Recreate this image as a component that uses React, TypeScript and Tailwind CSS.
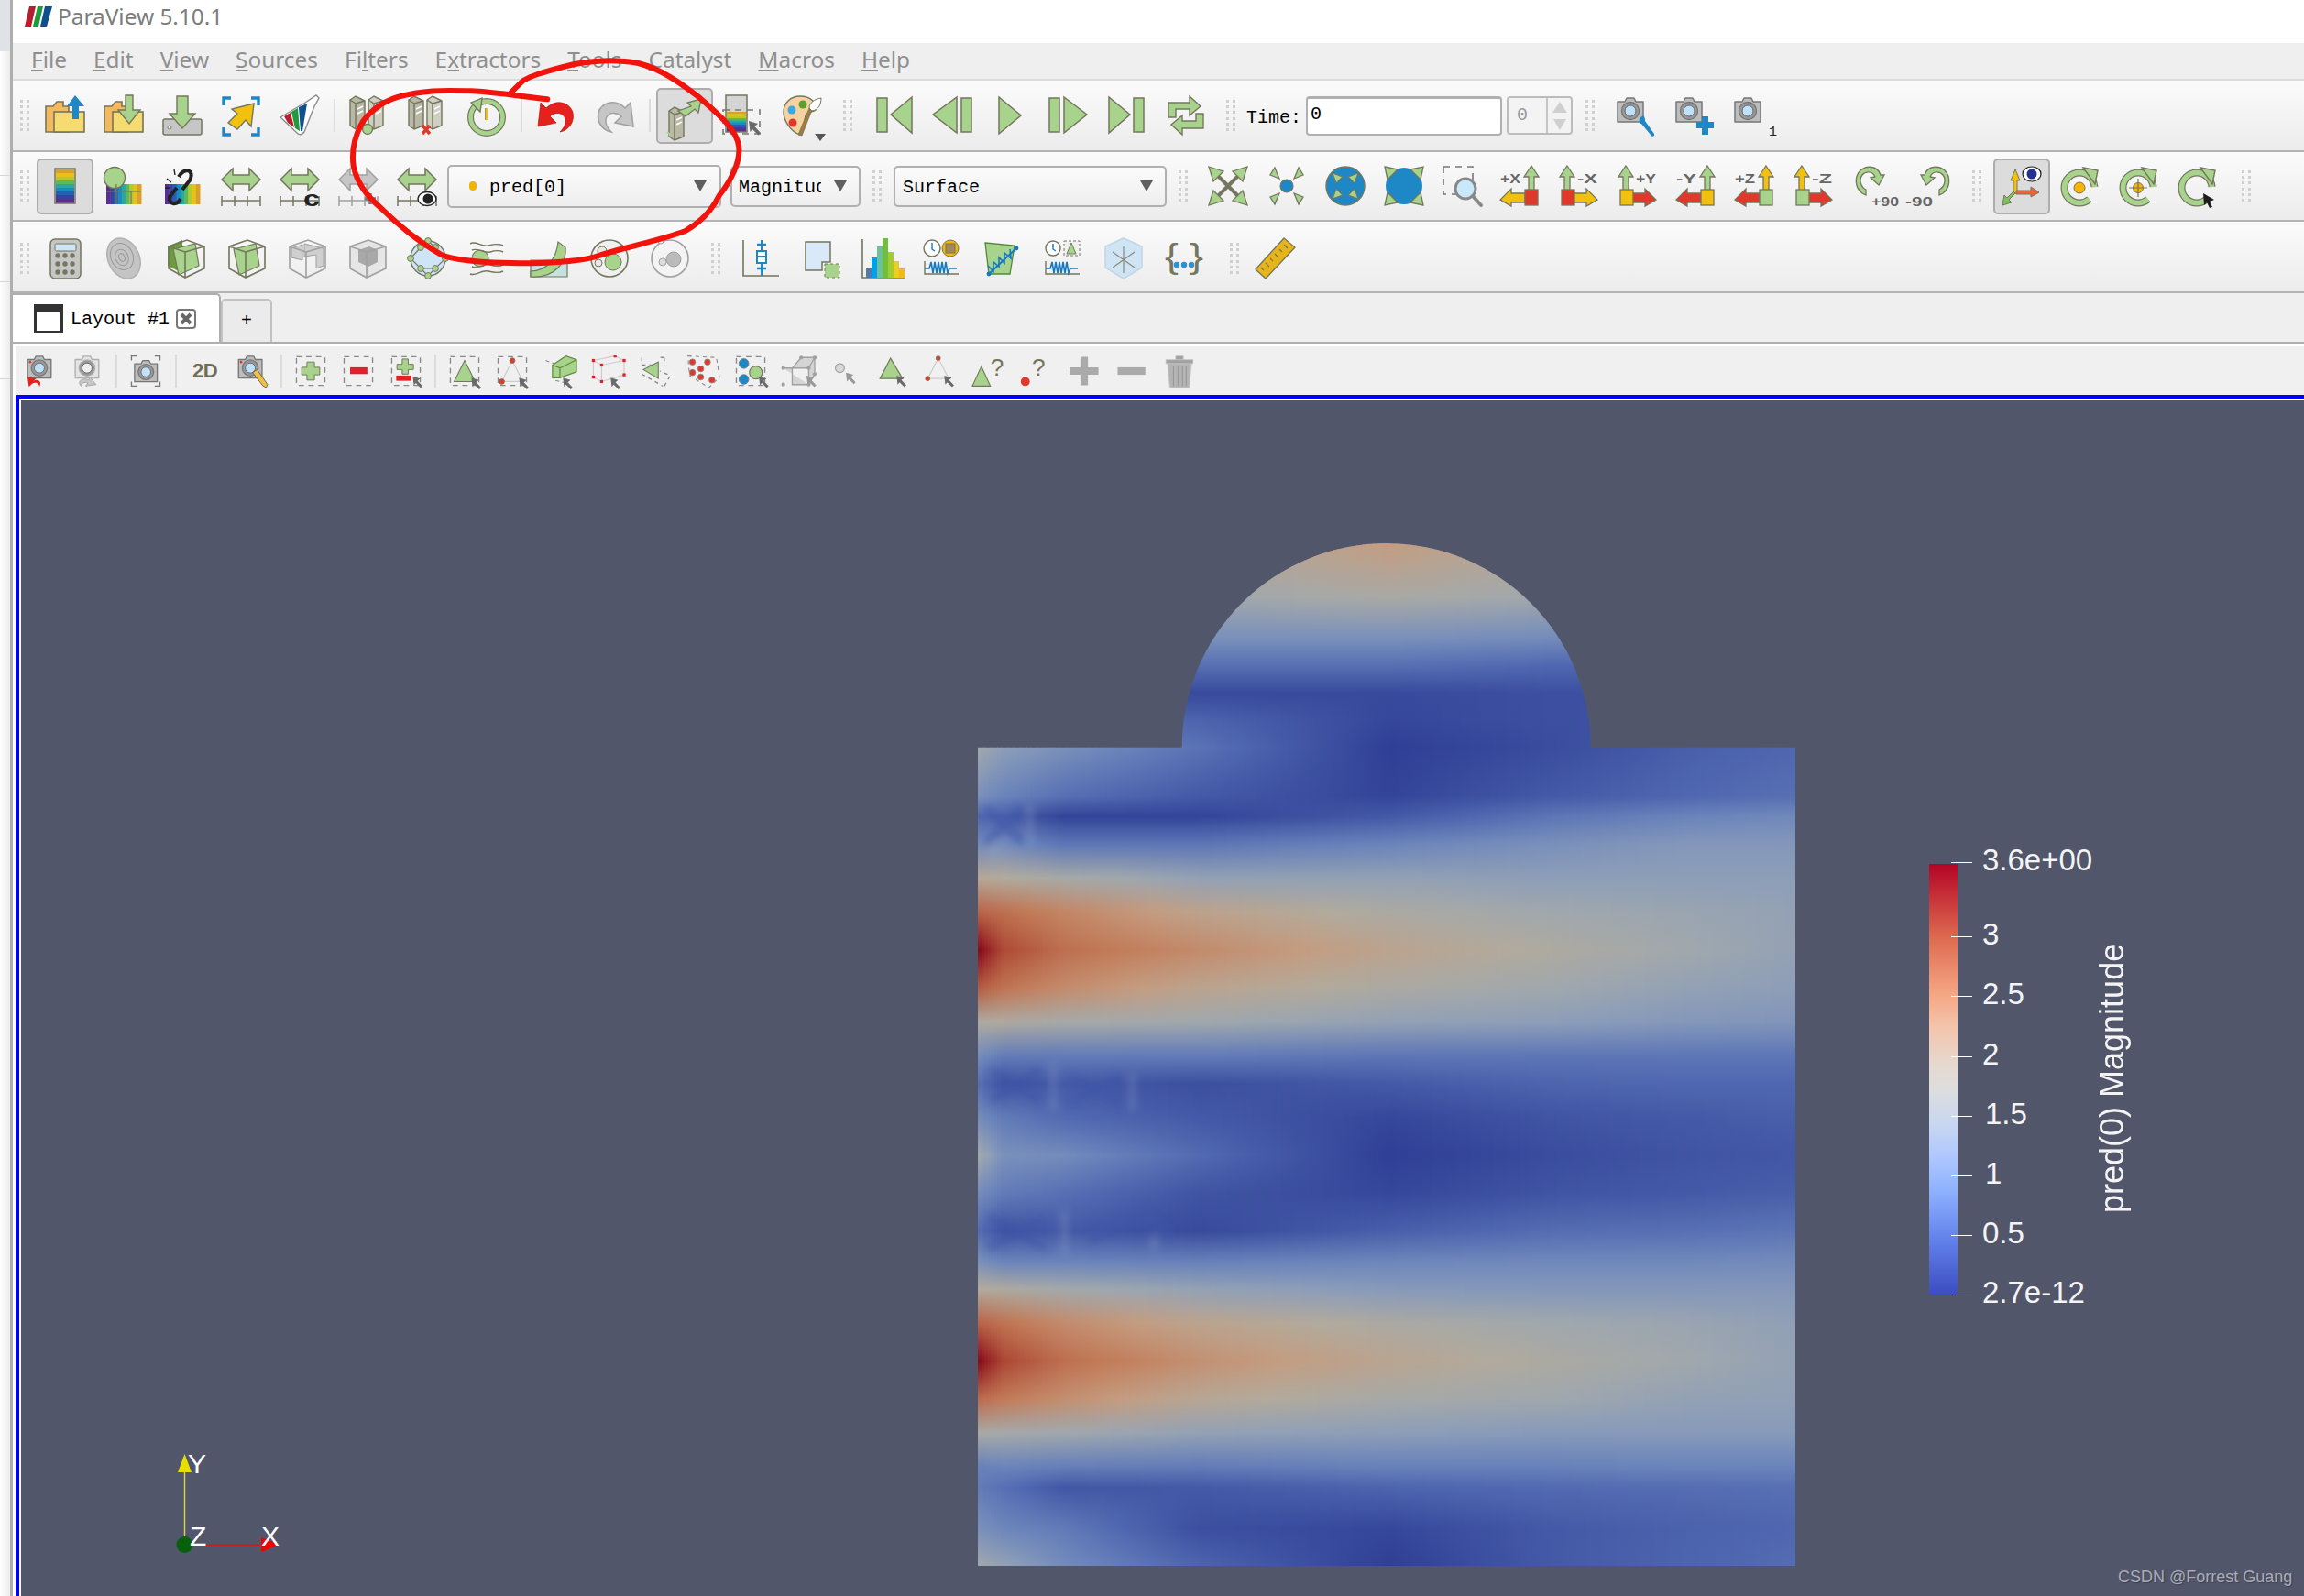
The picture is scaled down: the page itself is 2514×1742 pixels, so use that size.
import type { ReactNode } from "react";

const O = "#74765d";
const G = "#a8d38d";
const Y = "#f2c10f";
const R = "#e0392b";
const B = "#1e88c7";
const GY = "#c6c6c6";
const GO = "#a0a0a0";

const RAINBOW = ["#d9a02a", "#e8c21a", "#b5c92e", "#5cb85c", "#25a9a0", "#1e88c7", "#2460b0", "#3a3fa0", "#5a2d90"];

/* ---------- heat map data: scalar field sampled from the picture ---------- */
const COLS = [46, 90, 200, 450, 800, 1100, 1350, 1548];
const ROWS: [number, number[]][] = [
  [31, [0.5, 0.5, 0.5, 0.5, 0.6, 0.5, 0.5, 0.5]],
  [110, [0.42, 0.42, 0.42, 0.42, 0.46, 0.42, 0.42, 0.42]],
  [170, [0.3, 0.3, 0.3, 0.3, 0.3, 0.28, 0.28, 0.28]],
  [210, [0.18, 0.18, 0.18, 0.18, 0.18, 0.15, 0.15, 0.15]],
  [250, [0.04, 0.04, 0.04, 0.04, 0.04, 0.06, 0.06, 0.06]],
  [290, [0.14, 0.14, 0.14, 0.14, 0.03, 0.06, 0.08, 0.08]],
  [329, [0.42, 0.36, 0.3, 0.19, 0, 0.05, 0.12, 0.15]],
  [400, [0.3, 0.25, 0.18, 0.1, 0.02, 0.1, 0.15, 0.18]],
  [430, [0.15, 0.12, 0.02, 0.02, 0.1, 0.2, 0.25, 0.27]],
  [470, [0.28, 0.28, 0.2, 0.2, 0.25, 0.3, 0.33, 0.33]],
  [520, [0.52, 0.5, 0.45, 0.38, 0.38, 0.36, 0.36, 0.36]],
  [570, [0.78, 0.75, 0.68, 0.56, 0.47, 0.42, 0.4, 0.38]],
  [625, [1, 0.85, 0.75, 0.66, 0.55, 0.48, 0.42, 0.38]],
  [680, [0.8, 0.74, 0.66, 0.55, 0.47, 0.42, 0.38, 0.36]],
  [730, [0.48, 0.48, 0.45, 0.42, 0.38, 0.36, 0.33, 0.32]],
  [780, [0.28, 0.22, 0.22, 0.22, 0.2, 0.2, 0.2, 0.2]],
  [820, [0.17, 0.07, 0.1, 0.06, 0.1, 0.14, 0.15, 0.15]],
  [870, [0.28, 0.22, 0.16, 0.1, 0.03, 0.08, 0.1, 0.12]],
  [925, [0.42, 0.3, 0.28, 0.16, 0, 0.05, 0.08, 0.09]],
  [980, [0.28, 0.22, 0.18, 0.08, 0.03, 0.08, 0.1, 0.12]],
  [1035, [0.16, 0.07, 0.1, 0.04, 0.12, 0.17, 0.18, 0.2]],
  [1080, [0.3, 0.25, 0.25, 0.24, 0.26, 0.27, 0.27, 0.28]],
  [1120, [0.5, 0.48, 0.43, 0.38, 0.34, 0.33, 0.33, 0.33]],
  [1170, [0.78, 0.74, 0.66, 0.55, 0.47, 0.42, 0.4, 0.37]],
  [1225, [1, 0.86, 0.75, 0.64, 0.54, 0.47, 0.42, 0.38]],
  [1280, [0.76, 0.72, 0.65, 0.53, 0.45, 0.42, 0.38, 0.37]],
  [1330, [0.46, 0.44, 0.42, 0.38, 0.36, 0.34, 0.34, 0.34]],
  [1380, [0.24, 0.25, 0.23, 0.22, 0.24, 0.24, 0.25, 0.25]],
  [1410, [0.22, 0.18, 0.09, 0.1, 0.14, 0.16, 0.17, 0.18]],
  [1470, [0.3, 0.26, 0.22, 0.06, 0.03, 0.1, 0.13, 0.15]],
  [1524, [0.42, 0.38, 0.28, 0.14, 0, 0.1, 0.14, 0.17]],
];
const CMAP: [number, number[]][] = [
  [0, [47, 63, 149]],
  [0.15, [79, 103, 176]],
  [0.25, [106, 132, 187]],
  [0.35, [138, 156, 186]],
  [0.42, [160, 168, 173]],
  [0.5, [178, 170, 156]],
  [0.6, [196, 156, 128]],
  [0.72, [194, 122, 87]],
  [0.85, [174, 74, 54]],
  [1, [138, 12, 28]],
];
function colorAt(v: number) {
  let i = 0;
  while (i < CMAP.length - 2 && v > CMAP[i + 1][0]) i++;
  const [a, ca] = CMAP[i];
  const [b, cb] = CMAP[i + 1];
  const t = Math.min(1, Math.max(0, (v - a) / (b - a)));
  const c = ca.map((n, k) => Math.round(n + (cb[k] - n) * t));
  return `rgb(${c[0]},${c[1]},${c[2]})`;
}
function valueAt(x: number, vals: number[]) {
  let i = 0;
  while (i < COLS.length - 2 && x > COLS[i + 1]) i++;
  const t = (x - COLS[i]) / (COLS[i + 1] - COLS[i]);
  return vals[i] + (vals[i + 1] - vals[i]) * t;
}
const STRIPS = Array.from({ length: 251 }, (_, i) => 46 + i * 6);

function HeatMap() {
  const shape = "M46 329H421A375.5 298 0 0 1 1172 329H1548V1524H46Z";
  return (
    <svg width={892} height={1116} viewBox="46 31 1502 1493" preserveAspectRatio="none" className="absolute left-[1044px] top-[156px]">
      <defs>
        <clipPath id="mesh">
          <path d={shape} />
        </clipPath>
        <filter id="soft" x="-20%" y="-20%" width="140%" height="140%">
          <feGaussianBlur stdDeviation="7 6" />
        </filter>
        {STRIPS.map((x) => (
          <linearGradient key={x} id={`s${x}`} gradientUnits="userSpaceOnUse" x1="0" y1="31" x2="0" y2="1524">
            {ROWS.map(([y, vals]) => (
              <stop key={y} offset={(y - 31) / 1493} stopColor={colorAt(valueAt(x, vals))} />
            ))}
          </linearGradient>
        ))}
      </defs>
      <g clipPath="url(#mesh)">
        {STRIPS.map((x) => (
          <rect key={x} x={x} y={31} width={7} height={1493} fill={`url(#s${x})`} shapeRendering="crispEdges" />
        ))}
        <g filter="url(#soft)" fill="none" strokeWidth="12">
          <g stroke="#3f57a8" opacity="0.6">
            <path d="M60 418L130 468M60 468L130 418" />
            <path d="M70 800L160 845M70 845L160 800M215 810L310 850M215 850L310 810" />
            <path d="M65 1015L170 1060M65 1060L170 1015M250 1050L350 1010L400 1040" />
          </g>
          <g stroke="#93a6c8" opacity="0.35" strokeWidth="10">
            <path d="M142 412V470M76 470V495M185 790V860M330 805V860M205 1005V1070M370 1040V1065" />
          </g>
        </g>
      </g>
    </svg>
  );
}

/* ---------- small svg helpers ---------- */
function Ico({ children, s = 44 }: { children: ReactNode; s?: number }) {
  return (
    <svg width={s} height={s} viewBox="0 0 44 44" className="block overflow-visible">
      {children}
    </svg>
  );
}
function Cur({ x, y, c = "#6a6a6a" }: { x: number; y: number; c?: string }) {
  return <path d="M0 0L10 3L6.5 6L13 13L10.5 15.5L4 9L1.5 12Z" fill={c} transform={`translate(${x} ${y})`} />;
}
function Dash({ x = 3, y = 3, w = 38, h = 38, c = "#777" }: { x?: number; y?: number; w?: number; h?: number; c?: string }) {
  return <rect x={x} y={y} width={w} height={h} fill="none" stroke={c} strokeWidth="1.6" strokeDasharray="7 6" />;
}
function Bars({ x, y, w, h, vertical = true }: { x: number; y: number; w: number; h: number; vertical?: boolean }) {
  return (
    <g>
      {RAINBOW.map((c, i) =>
        vertical ? (
          <rect key={i} x={x} y={y + (i * h) / 9} width={w} height={h / 9 + 0.5} fill={c} />
        ) : (
          <rect key={i} x={x + (i * w) / 9} y={y} width={w / 9 + 0.5} height={h} fill={[...RAINBOW].reverse()[i]} />
        ),
      )}
    </g>
  );
}
function Server({ x, y, c = "#b9b8a6", s = O }: { x: number; y: number; c?: string; s?: string }) {
  return (
    <g transform={`translate(${x} ${y})`} stroke={s} strokeWidth="1.4">
      <path d="M0 4L6 0L16 5V32L6 36L0 32Z" fill={c} />
      <path d="M6 8L16 5M6 8V36M6 8L0 4" fill="none" />
      <path d="M8 14L14 11M8 19L14 16" stroke="#fff" />
    </g>
  );
}
function Folder({ back = "#f4b95e", front = "#f6dc70" }: { back?: string; front?: string }) {
  return (
    <g stroke={O} strokeWidth="1.6">
      <path d="M1 40V12H9L13 7H20V12H26V40Z" fill={back} />
      <rect x="10" y="18" width="33" height="22" fill={front} />
    </g>
  );
}
function Camera({ x = 0, y = 0, s = 1, c = "#bdbdbd", line = "#777", lens = "#bfe2fa", dot = false }: { x?: number; y?: number; s?: number; c?: string; line?: string; lens?: string; dot?: boolean }) {
  return (
    <g transform={`translate(${x} ${y}) scale(${s})`}>
      <path d="M2 6H10L12 2H20L22 6H30V28H2Z" fill={c} stroke={line} strokeWidth="1.5" strokeLinejoin="round" />
      <circle cx="16" cy="16" r="9.5" fill="#999" stroke={line} strokeWidth="1.4" />
      <circle cx="16" cy="16" r="6" fill={lens} stroke="#666" />
      {dot && <circle cx="5" cy="9" r="1.5" fill="#e0392b" />}
    </g>
  );
}
function RulerArrow({ c = G, line = O }: { c?: string; line?: string }) {
  return (
    <g stroke={line} strokeWidth="1.5">
      <path d="M1 15L13 3V10H31V3L43 15L31 27V20H13V27Z" fill={c} />
      <path d="M1 33V44M1 38H43M15 33V44M29 33V44M43 33V44" fill="none" />
    </g>
  );
}
function UpArrow({ x, c }: { x: number; c: string }) {
  return <path d={`M${x} 0L${x + 8} 12H${x + 3}V30H${x - 3}V12H${x - 8}Z`} fill={c} stroke={O} strokeWidth="1.3" />;
}
function SideArrow({ x, dir, c }: { x: number; dir: 1 | -1; c: string }) {
  const t = x + dir * 27;
  return <path d={`M${x} 30H${x + dir * 15}V25L${t} 37L${x + dir * 15} 44V40H${x}Z`} fill={c} stroke={O} strokeWidth="1.3" />;
}
function Axis({ label, up, box, side, flip }: { label: string; up: string; box: string; side: string; flip: boolean }) {
  const sx = flip ? 30 : 2;
  return (
    <Ico>
      <g transform={flip ? "translate(-4 0)" : undefined}>
        <UpArrow x={flip ? 37 : 8} c={up} />
        <SideArrow x={flip ? 30 : 14} dir={flip ? -1 : 1} c={side} />
        <rect x={sx} y={26} width="14" height="17" fill={box} stroke={O} strokeWidth="1.3" />
        <text x={flip ? 14 : 30} y="19" textAnchor="middle" fontFamily="Liberation Sans" fontWeight="700" fontSize="15" fill="#666" textLength="22" lengthAdjust="spacingAndGlyphs">
          {label}
        </text>
      </g>
    </Ico>
  );
}
function Rotate({ label, flip }: { label: string; flip: boolean }) {
  return (
    <Ico>
      <g transform={flip ? "translate(44 0) scale(-1 1)" : undefined}>
        <path d="M10 30C2 24 1 12 8 5C15 -1 27 0 30 10L34 10L28 21L19 13L24 12C21 5 13 6 10 10C6 15 8 23 14 26L14 32Z" fill={G} stroke={O} strokeWidth="1.3" />
      </g>
      <text x={flip ? 8 : 35} y="44" textAnchor="middle" fontFamily="Liberation Sans" fontWeight="700" fontSize="15" fill="#666" textLength="30" lengthAdjust="spacingAndGlyphs">
        {label}
      </text>
    </Ico>
  );
}
function RingArrow({ children }: { children?: ReactNode }) {
  return (
    <Ico>
      <circle cx="21" cy="24" r="16.5" fill="none" stroke={O} strokeWidth="8" strokeDasharray="88 16" strokeDashoffset="-14" />
      <circle cx="21" cy="24" r="16.5" fill="none" stroke={G} strokeWidth="5.6" strokeDasharray="88 16" strokeDashoffset="-14" />
      <path d="M25 2L41 5L38 20Z" fill={G} stroke={O} strokeWidth="1.4" />
      {children}
    </Ico>
  );
}
function CubeFrame({ line = O }: { line?: string }) {
  return <path d="M3 9L23 2L42 9V33L21 43L3 33ZM3 9L21 15V43M21 15L42 9" fill="none" stroke={line} strokeWidth="1.6" />;
}
function Trace({ y = 32 }: { y?: number }) {
  return (
    <g>
      <path d={`M3 ${y - 8}V${y + 6}H40`} fill="none" stroke={O} strokeWidth="1.4" />
      <path d={`M3 ${y}H8L10 ${y - 7}L12 ${y + 5}L14 ${y - 7}L16 ${y + 5}L18 ${y - 7}L20 ${y + 5}L22 ${y - 7}L24 ${y + 5}L26 ${y - 7}L28 ${y + 5}L30 ${y}H38`} fill="none" stroke="#1578c2" strokeWidth="1.6" />
    </g>
  );
}
function Clock({ x, y, r = 8 }: { x: number; y: number; r?: number }) {
  return (
    <g>
      <circle cx={x} cy={y} r={r} fill="#fff" stroke={O} strokeWidth="1.4" />
      <path d={`M${x} ${y - r + 3}V${y + 1}L${x + 3} ${y + 3}`} fill="none" stroke="#1578c2" strokeWidth="1.4" />
    </g>
  );
}

/* ---------- bar pieces ---------- */
function Btn({ children, w = "w-[64px]" }: { children: ReactNode; w?: string }) {
  return <div className={`${w} h-full shrink-0 flex items-center justify-center`}>{children}</div>;
}
function Checked({ children }: { children: ReactNode }) {
  return (
    <div className="w-[64px] h-full shrink-0 flex items-center justify-center">
      <div className="w-[62px] h-[61px] bg-[#dcdcdc] border-2 border-[#adadad] rounded-[5px] flex items-center justify-center">{children}</div>
    </div>
  );
}
function Grip({ w = "w-[25px]" }: { w?: string }) {
  return (
    <div className={`${w} shrink-0 flex justify-center`}>
      <div className="grid grid-cols-2 gap-x-[4px] gap-y-[3.4px]">
        {Array.from({ length: 12 }, (_, i) => (
          <span key={i} className="w-[3px] h-[3px] bg-[#d0d0d0]" />
        ))}
      </div>
    </div>
  );
}
function Sep({ w = "w-[12px]" }: { w?: string }) {
  return (
    <div className={`${w} shrink-0 flex justify-center`}>
      <span className="w-[2px] h-[36px] bg-[#dcdcdc]" />
    </div>
  );
}
function Caret({ c = "#5f5f5f" }: { c?: string }) {
  return <span className="w-0 h-0 border-x-[7px] border-x-transparent border-t-[12px]" style={{ borderTopColor: c }} />;
}
function ToolRow({ children, h }: { children: ReactNode; h: string }) {
  return <div className={`${h} flex items-center bg-linear-to-b from-[#fbfbfb] to-[#ececec] border-b-[2px] border-[#b4b4b4]`}>{children}</div>;
}

const TICKS: [number, string, number][] = [
  [505, "3.6e+00", 2163],
  [586, "3", 2163],
  [651, "2.5", 2163],
  [717, "2", 2163],
  [782, "1.5", 2166],
  [847, "1", 2166],
  [912, "0.5", 2163],
  [977, "2.7e-12", 2163],
];

const mono = "font-['Liberation_Mono',monospace]";

export default function App() {
  return (
    <div className="relative w-[2514px] h-[1742px] overflow-hidden flex bg-white font-['Noto_Sans',sans-serif]">
      {/* strip of the window behind */}
      <div className="w-[11px] shrink-0 flex flex-col bg-linear-to-r from-[#ffffff] to-[#ececec]">
        <div className="h-[56px] bg-[#dfe3e7]" />
        <div className="h-[136px] border-b border-[#d6d6d6]" />
        <div className="h-[116px] border-b border-[#d6d6d6]" />
        <div className="h-[106px] border-b border-[#d6d6d6]" />
      </div>
      <div className="w-[3px] shrink-0 bg-[#aeaeae]" />

      <div className="flex-1 min-w-0 flex flex-col">
        {/* title bar */}
        <div className="h-[47px] bg-white flex items-center pl-[12px] pb-[11px] shrink-0">
          <svg width="32" height="24" viewBox="0 0 32 24" className="block">
            <path d="M6 1H13L8 23H1Z" fill="#b3202c" />
            <path d="M15 1H21L16 23H10Z" fill="#1f9a3c" />
            <path d="M23 1H31L25 23H18Z" fill="#0f4f8f" />
          </svg>
          <span className="ml-[5px] text-[24.4px] text-[#7c7c7c] leading-none">ParaView 5.10.1</span>
        </div>
        {/* menu */}
        <div className="h-[41px] bg-[#efefef] shrink-0 flex items-center pl-[20px] pb-[2px] gap-x-[29px] border-b-[2px] border-[#dadada] text-[24.4px] text-[#8f8f8f] leading-none">
          <span><u>F</u>ile</span>
          <span><u>E</u>dit</span>
          <span><u>V</u>iew</span>
          <span><u>S</u>ources</span>
          <span>Fi<u>l</u>ters</span>
          <span>E<u>x</u>tractors</span>
          <span><u>T</u>ools</span>
          <span><u>C</u>atalyst</span>
          <span><u>M</u>acros</span>
          <span><u>H</u>elp</span>
        </div>

        {/* toolbar 1 */}
        <ToolRow h="h-[78px] shrink-0">
          <Grip />
          <Btn>
            <Ico>
              <Folder />
              <path d="M33 0L43 12H37V26H30V12H24Z" fill={B} />
            </Ico>
          </Btn>
          <Btn>
            <Ico>
              <Folder />
              <path d="M24 0H32V16H40L28 31L16 16H24Z" fill={G} stroke={O} strokeWidth="1.4" />
            </Ico>
          </Btn>
          <Btn>
            <Ico>
              <rect x="1" y="26" width="42" height="17" rx="2" fill={GY} stroke={O} strokeWidth="1.5" />
              <circle cx="8" cy="35" r="2" fill="#fff" stroke={O} />
              <path d="M16 1H28V20H36L22 36L8 20H16Z" fill={G} stroke={O} strokeWidth="1.4" />
            </Ico>
          </Btn>
          <Btn>
            <Ico>
              <path d="M3 11V3H11M33 3H41V11M3 35V43H11M41 35V43H33" fill="none" stroke={B} strokeWidth="3.4" />
              <path d="M36 9L33 34L27 27L18 37L8 30L18 20L12 15Z" fill={Y} stroke={O} strokeWidth="1.4" />
            </Ico>
          </Btn>
          <Btn>
            <Ico>
              <path d="M1 24L28 8L40 0L43 3L38 12L27 40Q23 45 19 41Z" fill="#fff" stroke="#8a8a8a" strokeWidth="1.4" />
              <path d="M5 23L12 19L16 35L9 30Z" fill="#b3202c" />
              <path d="M13 18L20 14L22 39L17 36Z" fill="#1f9a3c" />
              <path d="M21 13L30 9L25 39L23 39Z" fill="#0f4f8f" />
            </Ico>
          </Btn>
          <Sep />
          <Btn>
            <Ico>
              <Server x={1} y={1} />
              <Server x={21} y={1} c="#d0d0c2" />
              <circle cx="20" cy="37" r="5.5" fill={G} stroke={O} strokeWidth="1.3" />
            </Ico>
          </Btn>
          <Btn>
            <Ico>
              <Server x={1} y={1} />
              <Server x={21} y={1} c="#d0d0c2" />
              <path d="M16 33L24 42M24 33L16 42" stroke={R} strokeWidth="3.4" />
            </Ico>
          </Btn>
          <Btn>
            <Ico>
              <circle cx="22" cy="24" r="17.5" fill="none" stroke={O} strokeWidth="7" />
              <circle cx="22" cy="24" r="17.5" fill="none" stroke={G} strokeWidth="4.6" />
              <path d="M5 8L17 3L15 18Z" fill={G} stroke={O} strokeWidth="1.3" />
              <path d="M22 14V27" stroke={Y} strokeWidth="3" />
              <path d="M20.5 14V27M23.5 14V27" stroke={O} strokeWidth="0.7" />
            </Ico>
          </Btn>
          <Sep />
          <Btn>
            <Ico>
              <path d="M5 8L2 34L22 30L15 23C22 17 30 19 32 26C33 31 30 36 26 40C36 38 42 29 40 19C37 8 22 3 11 14Z" fill="#e6201c" stroke="#b51a16" strokeWidth="0.8" />
            </Ico>
          </Btn>
          <Btn>
            <Ico>
              <path d="M39 8L42 34L22 30L29 23C22 17 14 19 12 26C11 31 14 36 18 40C8 38 2 29 4 19C7 8 22 3 33 14Z" fill={GY} stroke={GO} strokeWidth="1.5" />
            </Ico>
          </Btn>
          <Sep />
          <Checked>
            <Ico>
              <Server x={5} y={13} c="#b9b8a6" />
              <path d="M15 17L29 12L25 8L40 4L37 19L33 15L23 23Z" fill={G} stroke={O} strokeWidth="1.3" />
              <path d="M7 44L3 40" stroke={G} strokeWidth="2" />
            </Ico>
          </Checked>
          <Btn>
            <Ico>
              <rect x="3" y="0" width="23" height="40" fill="#d4d4d4" stroke={O} strokeWidth="1.5" />
              <Bars x={4} y={18} w={21} h={21} />
              <Dash x={0} y={16} w={40} h={26} c="#777" />
              <Cur x={28} y={28} />
            </Ico>
          </Btn>
          <Btn>
            <Ico>
              <path d="M20 1C32 1 38 8 37 16C35 18 28 18 26 22C24 32 24 43 20 43C10 40 2 28 2 18C2 8 10 1 20 1Z" fill="#f5d2a2" stroke={O} strokeWidth="1.4" />
              <circle cx="11" cy="16" r="4.5" fill="#39a9e0" />
              <circle cx="23" cy="10" r="4.5" fill="#5aa02c" />
              <circle cx="12" cy="30" r="4.5" fill="#e0392b" />
              <path d="M18 43L30 14L33 16L22 44Z" fill="#a07c3c" stroke={O} strokeWidth="0.8" />
              <path d="M30 14C30 8 36 4 43 3C43 10 40 16 33 17Z" fill="#fff" stroke={O} strokeWidth="1" />
              <path d="M36 42H48L42 50Z" fill="#555" />
            </Ico>
          </Btn>
          <Grip w="w-[35px]" />
          <Btn>
            <Ico>
              <rect x="5" y="3" width="11" height="37" fill={G} stroke={O} strokeWidth="1.5" />
              <path d="M43 2V41L20 21Z" fill={G} stroke={O} strokeWidth="1.5" />
            </Ico>
          </Btn>
          <Btn>
            <Ico>
              <rect x="33" y="3" width="11" height="37" fill={G} stroke={O} strokeWidth="1.5" />
              <path d="M28 2V41L2 21Z" fill={G} stroke={O} strokeWidth="1.5" />
            </Ico>
          </Btn>
          <Btn>
            <Ico>
              <path d="M10 2L34 22L10 42Z" fill={G} stroke={O} strokeWidth="1.5" />
            </Ico>
          </Btn>
          <Btn>
            <Ico>
              <rect x="1" y="3" width="11" height="37" fill={G} stroke={O} strokeWidth="1.5" />
              <path d="M17 2L42 21L17 41Z" fill={G} stroke={O} strokeWidth="1.5" />
            </Ico>
          </Btn>
          <Btn>
            <Ico>
              <path d="M2 2L25 21L2 41Z" fill={G} stroke={O} strokeWidth="1.5" />
              <rect x="29" y="3" width="11" height="37" fill={G} stroke={O} strokeWidth="1.5" />
            </Ico>
          </Btn>
          <Btn>
            <Ico>
              <path d="M3 8H26V1L38 12L26 22V15H11V24H3ZM41 20V36H18V43L6 32L18 22V28H33V20Z" fill={G} stroke={O} strokeWidth="1.4" />
            </Ico>
          </Btn>
          <Grip w="w-[34px]" />
          <span className={`${mono} text-[20px] text-black leading-none mt-[6px]`}>Time:</span>
          <div className={`ml-[5px] w-[214px] h-[43px] bg-white border-2 border-[#b0b0b0] border-t-[3px] rounded-[4px] flex items-center pl-[3px] pb-[3px] ${mono} text-[20px] text-black`}>0</div>
          <div className="ml-[5px] w-[72px] h-[42px] bg-[#f3f3f3] border-2 border-[#bcbcbc] rounded-[4px] flex">
            <div className={`w-[41px] flex items-center pl-[9px] ${mono} text-[20px] text-[#9a9a9a]`}>0</div>
            <div className="flex-1 border-l-2 border-[#c6c6c6] flex flex-col items-center justify-center gap-y-[7px]">
              <span className="w-0 h-0 border-x-[8px] border-x-transparent border-b-[12px] border-b-[#cfcfcf]" />
              <Caret c="#cfcfcf" />
            </div>
          </div>
          <Grip w="w-[37px]" />
          <Btn>
            <Ico>
              <Camera y={1} />
              <path d="M26 25L30 22C32 24 32 26 32 28L42 42C43 45 39 46 38 43L28 31C26 31 25 29 26 25Z" fill={B} />
            </Ico>
          </Btn>
          <Btn>
            <Ico>
              <Camera y={1} />
              <path d="M30 23H37V29H43V36H37V43H30V36H24V29H30Z" fill={B} />
            </Ico>
          </Btn>
          <Btn>
            <Ico>
              <Camera y={1} />
              <text x="39" y="44" fontFamily="Liberation Mono" fontSize="15" fill="#222">1</text>
            </Ico>
          </Btn>
        </ToolRow>

        {/* toolbar 2 */}
        <ToolRow h="h-[76px] shrink-0">
          <Grip />
          <Checked>
            <Ico>
              <rect x="11" y="3" width="22" height="38" fill="#ddd" stroke={O} strokeWidth="1.5" />
              <Bars x={12} y={4} w={20} h={36} />
            </Ico>
          </Checked>
          <Btn>
            <Ico>
              <Bars x={3} y={20} w={38} h={22} vertical={false} />
              <circle cx="12" cy="13" r="11.5" fill={G} stroke={O} strokeWidth="1.4" />
              <path d="M3 28H41M14 20V42M30 28V42" stroke={O} strokeWidth="1.2" />
            </Ico>
          </Btn>
          <Btn>
            <Ico>
              <Bars x={3} y={20} w={38} h={22} vertical={false} />
              <path d="M18 12C24 1 36 4 30 16L22 26M16 24L8 34C6 42 16 44 20 36" fill="none" stroke="#222" strokeWidth="4" />
              <path d="M5 14L10 18M13 4L14 10M3 24H9" stroke="#222" strokeWidth="1.4" />
            </Ico>
          </Btn>
          <Btn>
            <Ico>
              <RulerArrow />
            </Ico>
          </Btn>
          <Btn>
            <Ico>
              <RulerArrow />
              <text x="26" y="44" fontFamily="Liberation Sans" fontWeight="700" fontSize="24" fill="#222" textLength="18" lengthAdjust="spacingAndGlyphs">c</text>
            </Ico>
          </Btn>
          <Btn>
            <Ico>
              <RulerArrow c={GY} line={GO} />
              <path d="M35 30V42M29 36H41" stroke="#777" strokeWidth="3.5" />
            </Ico>
          </Btn>
          <Btn>
            <Ico>
              <RulerArrow />
              <ellipse cx="33" cy="36" rx="10" ry="7.5" fill="#fff" stroke="#222" strokeWidth="1.4" />
              <circle cx="34" cy="36" r="5.5" fill="#222" />
            </Ico>
          </Btn>
          <div className={`ml-px w-[299px] h-[47px] shrink-0 border-2 border-[#b0b0b0] rounded-[5px] bg-linear-to-b from-[#fbfbfb] to-[#eeeeee] flex items-center pl-[22px] pr-[14px] ${mono} text-[20px] text-black`}>
            <span className="w-[8px] h-[10px] rounded-full bg-[#f0b400] mr-[14px]" />
            <span className="flex-1 pt-[3px]">pred[0]</span>
            <Caret />
          </div>
          <div className={`ml-[10px] w-[142px] h-[45px] shrink-0 border-2 border-[#b0b0b0] rounded-[5px] bg-linear-to-b from-[#fbfbfb] to-[#eeeeee] flex items-center pl-[7px] ${mono} text-[20px] text-black`}>
            <span className="w-[90px] pt-[3px] overflow-hidden whitespace-nowrap">Magnitude</span>
            <span className="ml-[14px] flex">
              <Caret />
            </span>
          </div>
          <Grip w="w-[36px]" />
          <div className={`w-[298px] h-[45px] shrink-0 border-2 border-[#b0b0b0] rounded-[5px] bg-linear-to-b from-[#fbfbfb] to-[#eeeeee] flex items-center pl-[8px] pr-[13px] ${mono} text-[20px] text-black`}>
            <span className="flex-1 pt-[3px]">Surface</span>
            <Caret />
          </div>
          <Grip w="w-[35px]" />
          <Btn>
            <Ico>
              <path d="M8 8L36 36M36 8L8 36" stroke={O} strokeWidth="4" />
              <path d="M1 1L17 6L6 17ZM43 1L38 17L27 6ZM1 43L6 27L17 38ZM43 43L27 38L38 27Z" fill={G} stroke={O} strokeWidth="1.3" />
            </Ico>
          </Btn>
          <Btn>
            <Ico>
              <circle cx="22" cy="22" r="7" fill={B} stroke={O} strokeWidth="1.2" />
              <path d="M14 14L4 10L9 2ZM30 14L40 10L35 2ZM14 30L4 34L9 42ZM30 30L40 34L35 42Z" fill={G} stroke={O} strokeWidth="1.3" />
            </Ico>
          </Btn>
          <Btn>
            <Ico>
              <circle cx="22" cy="22" r="21" fill={B} stroke={O} strokeWidth="1.4" />
              <path d="M8 8L19 12L12 19ZM36 8L32 19L25 12ZM8 36L12 25L19 32ZM36 36L25 32L32 25Z" fill={G} stroke={O} strokeWidth="1.2" />
            </Ico>
          </Btn>
          <Btn>
            <Ico>
              <circle cx="22" cy="22" r="20" fill={B} />
              <path d="M1 1L15 4L4 15ZM43 1L40 15L29 4ZM1 43L4 29L15 40ZM43 43L29 40L40 29Z" fill={G} stroke={O} strokeWidth="1.3" />
            </Ico>
          </Btn>
          <Btn>
            <Ico>
              <Dash x={1} y={1} w={32} h={30} c="#777" />
              <circle cx="25" cy="25" r="11" fill="#c8e8fb" stroke="#888" strokeWidth="3" />
              <path d="M33 33L42 43" stroke="#888" strokeWidth="4" strokeLinecap="round" />
            </Ico>
          </Btn>
          <Btn>
            <Axis label="+X" up={G} box={R} side={Y} flip />
          </Btn>
          <Btn>
            <Axis label="-X" up={G} box={R} side={Y} flip={false} />
          </Btn>
          <Btn>
            <Axis label="+Y" up={G} box={Y} side={R} flip={false} />
          </Btn>
          <Btn>
            <Axis label="-Y" up={G} box={Y} side={R} flip />
          </Btn>
          <Btn>
            <Axis label="+Z" up={Y} box={G} side={R} flip />
          </Btn>
          <Btn>
            <Axis label="-Z" up={Y} box={G} side={R} flip={false} />
          </Btn>
          <Btn>
            <Rotate label="+90" flip={false} />
          </Btn>
          <Btn>
            <Rotate label="-90" flip />
          </Btn>
          <Grip w="w-[34px]" />
          <Checked>
            <Ico>
              <path d="M15 4L20 16H17V30H13V16H10Z" fill={Y} stroke={O} strokeWidth="1" />
              <path d="M16 27H32V23L41 29L32 34V31H16Z" fill="#f0613a" stroke={O} strokeWidth="1" />
              <path d="M15 30L8 37L11 40L1 43L3 32L6 35L13 28Z" fill="#7fc25d" stroke={O} strokeWidth="1" />
              <ellipse cx="33" cy="9" rx="10" ry="8" fill="#fff" stroke="#222" strokeWidth="1.2" />
              <circle cx="33" cy="9" r="5.5" fill="#25318f" />
            </Ico>
          </Checked>
          <Btn>
            <RingArrow>
              <circle cx="21" cy="24" r="6" fill="#f7b400" stroke={O} />
            </RingArrow>
          </Btn>
          <Btn>
            <RingArrow>
              <circle cx="21" cy="24" r="5.5" fill="#f7b400" stroke={O} />
              <path d="M21 14V34M11 24H31" stroke={O} strokeWidth="1.2" />
            </RingArrow>
          </Btn>
          <Btn>
            <RingArrow>
              <path d="M28 30L40 37L35 39L38 45L35 46L32 40L29 43Z" fill="#1d1d1d" />
            </RingArrow>
          </Btn>
          <Grip w="w-[42px]" />
        </ToolRow>

        {/* toolbar 3 */}
        <ToolRow h="h-[78px] shrink-0 pt-[4px]">
          <Grip />
          <Btn>
            <Ico>
              <rect x="6" y="1" width="33" height="43" rx="5" fill={GY} stroke={O} strokeWidth="1.5" />
              <rect x="11" y="6" width="23" height="8" rx="1.5" fill="#cfe4f7" stroke={O} />
              {[19, 28, 37].map((y) => [14, 22, 30].map((x) => <circle key={`${x}${y}`} cx={x} cy={y} r="2.7" fill={O} />))}
            </Ico>
          </Btn>
          <Btn>
            <Ico>
              <ellipse cx="22" cy="22" rx="17" ry="23" transform="rotate(-25 22 22)" fill="#c4c4c4" stroke="#b0b0b0" strokeWidth="1.5" />
              <ellipse cx="20" cy="20" rx="12" ry="15" transform="rotate(-25 20 20)" fill="none" stroke="#999" />
              <ellipse cx="20" cy="21" rx="7" ry="9" transform="rotate(-25 20 21)" fill="none" stroke="#999" />
              <ellipse cx="20" cy="21" rx="3" ry="4.5" transform="rotate(-25 20 21)" fill="none" stroke="#999" />
            </Ico>
          </Btn>
          <div className="w-[3px] shrink-0" />
          <Btn w="w-[66px]">
            <Ico>
              <path d="M2 9L18 2V38L2 30Z" fill="#6f9a3f" />
              <path d="M8 12L32 6L36 30L14 40Z" fill={G} stroke={O} strokeWidth="1.2" />
              <CubeFrame />
            </Ico>
          </Btn>
          <Btn w="w-[66px]">
            <Ico>
              <path d="M8 12L32 6L36 30L14 40Z" fill={G} stroke={O} strokeWidth="1.2" />
              <CubeFrame />
            </Ico>
          </Btn>
          <Btn w="w-[66px]">
            <Ico>
              <path d="M5 11L17 7V24L5 21ZM19 6L40 11V30L32 33V18L19 20Z" fill="#cfcfcf" stroke={GO} />
              <CubeFrame line={GO} />
            </Ico>
          </Btn>
          <Btn w="w-[66px]">
            <Ico>
              <path d="M3 9L23 2L42 9V33L21 43L3 33Z" fill="#e6e6e6" />
              <path d="M12 13L24 9L33 13V26L23 31L12 26Z" fill="#a8a8a8" />
              <CubeFrame line={GO} />
            </Ico>
          </Btn>
          <Btn w="w-[66px]">
            <Ico>
              <circle cx="22" cy="22" r="19" fill="#cfe4f7" stroke={O} strokeWidth="1.4" />
              <path d="M3 22L14 10H30L41 22L30 33H14ZM14 10L22 3L30 10M14 33L22 41L30 33" fill="none" stroke={O} strokeWidth="1.2" />
              {[[3, 22], [14, 10], [30, 10], [41, 22], [14, 33], [30, 33], [22, 41], [22, 3]].map(([x, y]) => (
                <circle key={`${x}${y}`} cx={x} cy={y} r="3.4" fill={G} stroke={O} />
              ))}
            </Ico>
          </Btn>
          <Btn w="w-[66px]">
            <Ico>
              <circle cx="13" cy="22" r="9" fill={G} stroke={O} strokeWidth="1.2" />
              <path d="M2 6C8 2 14 10 22 8C30 6 34 6 38 8M4 13C10 10 18 17 24 15C30 13 34 13 38 15M4 31C10 34 18 27 24 29C30 31 34 31 38 29M2 39C8 42 14 34 22 36C30 38 34 38 38 36" fill="none" stroke={O} strokeWidth="1.4" />
            </Ico>
          </Btn>
          <Btn w="w-[66px]">
            <Ico>
              <path d="M2 24H42V42H2Z" fill="#c5e2df" stroke={O} strokeWidth="1.2" />
              <path d="M2 36C20 36 30 22 32 4L40 10C42 26 28 44 2 42Z" fill={G} stroke={O} strokeWidth="1.2" />
            </Ico>
          </Btn>
          <Btn w="w-[66px]">
            <Ico>
              <circle cx="22" cy="22" r="20" fill="#f0f0f0" stroke={O} strokeWidth="1.6" />
              <circle cx="14" cy="14" r="5" fill="#e8e8e8" stroke={O} />
              <circle cx="26" cy="26" r="9" fill={G} stroke={O} />
              <circle cx="10" cy="27" r="4" fill="#e8e8e8" stroke={O} />
            </Ico>
          </Btn>
          <Btn w="w-[66px]">
            <Ico>
              <circle cx="22" cy="22" r="20" fill="#f4f4f4" stroke={GO} strokeWidth="1.6" />
              <circle cx="12" cy="3" r="3" fill="#eee" stroke={GO} />
              <circle cx="26" cy="23" r="8" fill="#bbb" stroke={GO} />
              <circle cx="14" cy="26" r="4" fill="#ddd" stroke={GO} />
            </Ico>
          </Btn>
          <Grip w="w-[34px]" />
          <Btn>
            <Ico>
              <path d="M3 2V41H42" fill="none" stroke={O} strokeWidth="1.6" />
              <path d="M23 2V41" stroke={B} strokeWidth="2" />
              <path d="M18 7H28M18 33H28" stroke={B} strokeWidth="2.5" />
              <rect x="18" y="14" width="10" height="13" fill="#fff" stroke={B} strokeWidth="2" />
              <path d="M18 20H28" stroke={B} strokeWidth="2" />
            </Ico>
          </Btn>
          <div className="w-px shrink-0" />
          <Btn w="w-[66px]">
            <Ico>
              <path d="M5 4H32V26H23V35H5Z" fill="#d9e9f7" stroke={O} strokeWidth="1.5" />
              <rect x="26" y="28" width="16" height="15" fill={G} stroke={O} strokeDasharray="3 3" />
            </Ico>
          </Btn>
          <Btn w="w-[66px]">
            <Ico>
              <path d="M1 1V43H47" fill="none" stroke={O} strokeWidth="1.6" />
              <rect x="5" y="33" width="6" height="10" fill="#5078a8" />
              <rect x="11" y="21" width="6" height="22" fill="#00a0ef" />
              <rect x="17" y="9" width="6" height="34" fill="#6cc09a" />
              <rect x="23" y="0" width="6" height="43" fill="#6fbe3c" />
              <rect x="29" y="15" width="6" height="28" fill="#a5cc2e" />
              <rect x="35" y="25" width="6" height="18" fill="#e8d020" />
              <rect x="41" y="33" width="6" height="10" fill="#f6b818" />
            </Ico>
          </Btn>
          <Btn w="w-[66px]">
            <Ico>
              <Clock x={11} y={11} r={9} />
              <circle cx="31" cy="11" r="9" fill="#f7b400" stroke={O} />
              <rect x="26" y="6" width="10" height="10" fill="#a08a5a" stroke={O} />
              <Trace y={33} />
            </Ico>
          </Btn>
          <Btn w="w-[66px]">
            <Ico>
              <path d="M3 5L35 8L30 39H7Z" fill={G} stroke="#4f8a3c" strokeWidth="1.3" />
              <path d="M7 39L37 11" stroke="#1578c2" strokeWidth="1.8" />
              <path d="M6 30L12 36L12 26L18 31L18 21L24 27L24 16L31 22L30 12" fill="none" stroke="#1578c2" strokeWidth="1.6" />
              <circle cx="7" cy="39" r="2.4" fill="#1578c2" />
              <circle cx="37" cy="11" r="2.4" fill="#1578c2" />
            </Ico>
          </Btn>
          <Btn w="w-[66px]">
            <Ico>
              <Clock x={11} y={11} r={8} />
              <rect x="23" y="3" width="17" height="16" fill="#f0f0f0" stroke="#777" strokeDasharray="3 2" />
              <path d="M31 5L36 17H26Z" fill={G} stroke={O} />
              <Trace y={33} />
            </Ico>
          </Btn>
          <Btn w="w-[66px]">
            <Ico>
              <path d="M2 9L22 0L42 9V32L22 44L2 32Z" fill="#cfe4f4" stroke="#c4d6e4" strokeWidth="1.6" />
              <path d="M22 9V38M10 15L34 32M34 15L10 32" stroke="#8a8a7a" strokeWidth="1.2" />
            </Ico>
          </Btn>
          <Btn w="w-[66px]">
            <Ico>
              <text x="22" y="32" textAnchor="middle" fontFamily="Liberation Sans" fontSize="36" fill={O} textLength="42" lengthAdjust="spacingAndGlyphs">{"{   }"}</text>
              <circle cx="14" cy="29" r="3.2" fill="#2f8fd0" />
              <circle cx="22" cy="29" r="3.2" fill="#2f8fd0" />
              <circle cx="30" cy="29" r="3.2" fill="#2f8fd0" />
            </Ico>
          </Btn>
          <Grip w="w-[44px]" />
          <Btn w="w-[44px]">
            <Ico>
              <path d="M32 0L44 10L12 44L1 34Z" fill="#e8b518" stroke={O} strokeWidth="1.3" />
              <path d="M32 7L36 11M27 12L30 15M22 17L26 21M17 22L20 25M12 27L16 31M7 32L10 35" stroke={O} strokeWidth="1.2" />
            </Ico>
          </Btn>
        </ToolRow>

        {/* tabs */}
        <div className="h-[55px] shrink-0 bg-[#efefef] flex items-end border-b-[2px] border-[#aeaeae]">
          <div className="w-[227px] h-[53px] bg-white border-t-[2px] border-r-[2px] border-[#aeaeae] rounded-tr-[5px] flex items-center pl-[23px]">
            <span className="w-[32px] h-[32px] bg-[#333] pt-[8px] px-[3px] pb-[3px] shrink-0">
              <span className="block w-full h-full bg-white" />
            </span>
            <span className={`ml-[8px] mt-[3px] ${mono} text-[20px] text-black whitespace-pre`}>Layout #1</span>
            <svg width="22" height="22" viewBox="0 0 22 22" className="ml-[7px] block">
              <rect x="1" y="1" width="20" height="20" rx="3" fill="#fff" stroke="#777" strokeWidth="2" />
              <path d="M6 6L16 16M16 6L6 16" stroke="#666" strokeWidth="4" />
            </svg>
          </div>
          <div className={`w-[56px] h-[47px] bg-[#ebebeb] border-2 border-b-0 border-[#c2c2c2] rounded-t-[5px] flex items-center justify-center ${mono} text-[20px] text-black`}>+</div>
        </div>

        {/* view toolbar */}
        <div className="h-[56px] shrink-0 pt-[3px] bg-white">
          <div className="h-full flex items-center bg-[#f0f0f0] ml-[3px]">
            <Btn w="w-[52px]">
              <Ico s={36}>
                <Camera x={4} s={1.12} dot />
                <path d="M8 43L6 30L18 32L14 35C20 32 26 36 22 43C22 38 16 36 12 39Z" fill="#e6201c" />
              </Ico>
            </Btn>
            <Btn w="w-[52px]">
              <Ico s={36}>
                <Camera x={4} s={1.12} c="#e4e4e4" line="#b0b0b0" lens="#eee" />
                <path d="M14 42C8 36 16 30 24 34L26 30L34 40L20 42L23 38C19 36 14 38 14 42Z" fill={GY} stroke={GO} />
              </Ico>
            </Btn>
            <Sep />
            <Btn w="w-[52px]">
              <Ico s={36}>
                <path d="M3 8V2H10M34 2H41V8M3 36V42H10M34 42H41V36" fill="none" stroke="#777" strokeWidth="1.6" />
                <Camera x={5} y={6} s={1.08} />
              </Ico>
            </Btn>
            <Sep w="w-[14px]" />
            <Btn w="w-[49px]">
              <span className="font-['Liberation_Sans',sans-serif] font-bold text-[22px] text-[#6d6e55] tracking-tight">2D</span>
            </Btn>
            <Btn w="w-[52px]">
              <Ico s={36}>
                <Camera x={3} s={1.12} dot />
                <path d="M24 24L30 20L44 40L42 44L38 42Z" fill="#f0c040" stroke="#555" />
              </Ico>
            </Btn>
            <Sep w="w-[13px]" />
            <Btn w="w-[52px]">
              <Ico s={36}>
                <Dash c="#888" />
                <path d="M17 10H27V17H34V27H27V34H17V27H10V17H17Z" fill={G} stroke={O} strokeWidth="1.2" />
              </Ico>
            </Btn>
            <Btn w="w-[52px]">
              <Ico s={36}>
                <Dash c="#888" />
                <rect x="11" y="17" width="23" height="9" fill="#e0202a" />
              </Ico>
            </Btn>
            <Btn w="w-[52px]">
              <Ico s={36}>
                <Dash c="#888" />
                <path d="M17 6H25V13H32V20H25V26H17V20H10V13H17Z" fill={G} stroke={O} strokeWidth="1.2" />
                <rect x="9" y="28" width="20" height="7" fill="#e0202a" />
                <Cur x={31} y={29} />
              </Ico>
            </Btn>
            <Sep />
            <Btn w="w-[52px]">
              <Ico s={36}>
                <Dash c="#888" />
                <path d="M22 8L36 36H8Z" fill={G} stroke={O} strokeWidth="1.3" />
                <Cur x={31} y={31} />
              </Ico>
            </Btn>
            <Btn w="w-[52px]">
              <Ico s={36}>
                <Dash c="#888" />
                <path d="M22 8L36 36H8Z" fill="none" stroke="#ccc" strokeWidth="1.5" />
                <circle cx="22" cy="8" r="3.5" fill={R} stroke={O} />
                <circle cx="8" cy="36" r="3.5" fill={R} stroke={O} />
                <Cur x={31} y={31} />
              </Ico>
            </Btn>
            <Btn w="w-[52px]">
              <Ico s={36}>
                <path d="M3 8L14 12V34L30 38" fill="none" stroke="#888" strokeWidth="1.4" strokeDasharray="5 4" />
                <path d="M12 14L30 2L44 7V23L22 31H12Z" fill={G} stroke="#5f8a3c" strokeWidth="1.5" />
                <path d="M12 14L22 18V31M22 18L44 7" fill="none" stroke="#5f8a3c" strokeWidth="1.5" />
                <Cur x={26} y={31} />
              </Ico>
            </Btn>
            <Btn w="w-[52px]">
              <Ico s={36}>
                <path d="M3 8L32 2L44 8V27L14 36L3 30Z" fill="none" stroke="#ccc" strokeWidth="1.4" />
                <path d="M3 8L14 14L44 8M14 14V36" fill="none" stroke="#ccc" strokeWidth="1.4" />
                {[[3, 8], [14, 14], [32, 2], [44, 8], [3, 30], [14, 36], [44, 27]].map(([x, y]) => (
                  <rect key={`${x}${y}`} x={x - 2} y={y - 2} width="4" height="4" fill="#e0202a" />
                ))}
                <Cur x={26} y={31} />
              </Ico>
            </Btn>
            <Btn w="w-[52px]">
              <Ico s={36}>
                <path d="M4 4V14M4 14H22M4 26L32 42M34 42L42 28L28 22M34 4H26M34 4V16" fill="none" stroke="#888" strokeWidth="1.6" strokeDasharray="5 5" />
                <path d="M6 20L26 10V32Z" fill={G} stroke={O} strokeWidth="1.3" />
              </Ico>
            </Btn>
            <Btn w="w-[52px]">
              <Ico s={36}>
                <path d="M2 2L40 4L44 30L30 44L4 28Z" fill="none" stroke="#888" strokeWidth="1.3" strokeDasharray="5 5" />
                {[[8, 10], [28, 10], [19, 19], [8, 24], [19, 30], [34, 34]].map(([x, y]) => (
                  <circle key={`${x}${y}`} cx={x} cy={y} r="4" fill={R} stroke="#888" />
                ))}
              </Ico>
            </Btn>
            <Btn w="w-[52px]">
              <Ico s={36}>
                <Dash c="#888" />
                <circle cx="13" cy="12" r="6.5" fill={B} stroke="#777" />
                <circle cx="13" cy="33" r="6.5" fill={B} stroke="#777" />
                <circle cx="29" cy="24" r="8.5" fill={G} stroke={O} strokeWidth="1.4" />
                <Cur x={33} y={29} />
              </Ico>
            </Btn>
            <Btn w="w-[52px]">
              <Ico s={36}>
                <path d="M2 18L14 18V40H36V18H14L26 4H44V26L36 40M36 18L44 4" fill="#d4d4d4" stroke={GO} strokeWidth="1.6" />
                {[[2, 18], [26, 4], [44, 4], [36, 18], [2, 40], [36, 40], [44, 26]].map(([x, y]) => (
                  <circle key={`${x}${y}`} cx={x} cy={y} r="2.6" fill={GO} />
                ))}
                <Cur x={33} y={28} c="#999" />
              </Ico>
            </Btn>
            <Btn w="w-[52px]">
              <Ico s={36}>
                <circle cx="14" cy="18" r="6" fill="#d8d8d8" stroke={GO} strokeWidth="1.4" />
                <Cur x={22} y={24} c="#999" />
              </Ico>
            </Btn>
            <Btn w="w-[52px]">
              <Ico s={36}>
                <path d="M18 5L34 32H4Z" fill={G} stroke={O} strokeWidth="1.5" />
                <Cur x={26} y={28} />
              </Ico>
            </Btn>
            <Btn w="w-[52px]">
              <Ico s={36}>
                <path d="M18 5L32 32H4Z" fill="none" stroke="#ccc" strokeWidth="1.4" />
                <circle cx="18" cy="5" r="3" fill={R} stroke={O} />
                <circle cx="4" cy="32" r="3" fill={R} stroke={O} />
                <Cur x={26} y={28} />
              </Ico>
            </Btn>
            <Btn w="w-[52px]">
              <Ico s={36}>
                <path d="M12 16L24 42H0Z" fill={G} stroke={O} strokeWidth="1.4" />
                <text x="24" y="28" fontFamily="Liberation Sans" fontSize="32" fill={O}>?</text>
              </Ico>
            </Btn>
            <Btn w="w-[52px]">
              <Ico s={36}>
                <circle cx="7" cy="36" r="6" fill={R} />
                <text x="16" y="28" fontFamily="Liberation Sans" fontSize="32" fill={O}>?</text>
              </Ico>
            </Btn>
            <Btn w="w-[52px]">
              <Ico s={36}>
                <path d="M17 3H27V17H41V27H27V41H17V27H3V17H17Z" fill="#aaa" />
              </Ico>
            </Btn>
            <Btn w="w-[52px]">
              <Ico s={36}>
                <rect x="3" y="17" width="37" height="10" fill="#aaa" />
              </Ico>
            </Btn>
            <Btn w="w-[52px]">
              <Ico s={36}>
                <path d="M6 12H38L35 44H9Z" fill="#b4b4b4" stroke="#c8c8c8" />
                <path d="M14 16V42M20 16V42M26 16V42M31 16V42" stroke="#8f8f8f" />
                <path d="M4 7H40V12H4ZM17 2H27V7H17Z" fill="#a0a0a0" stroke="#c0c0c0" />
              </Ico>
            </Btn>
          </div>
        </div>

        {/* render view */}
        <div className="flex-1 min-h-0 flex flex-col pl-[3px] bg-white">
          <div className="flex-1 min-h-0 border-l-[4px] border-t-[4px] border-[#0000ff] bg-white pl-[2px] pt-[2px] flex">
            <div className="relative flex-1 bg-[#52566b] overflow-hidden">
              <HeatMap />
              {/* scalar bar */}
              <div className="absolute left-[2082px] top-[506px] w-[31px] h-[471px] bg-[linear-gradient(to_bottom,#b40426_0%,#dd6a4f_17%,#f5a582_30%,#f4c5ad_38%,#e6d9d0_47%,#dddddd_52%,#c9d7f0_60%,#aec7ff_68%,#8db0fe_76%,#6282ea_87%,#3b4cc0_100%)]" />
              {TICKS.map(([y, label, x]) => (
                <div key={label}>
                  <div className="absolute left-[2106px] w-[23px] h-px bg-white" style={{ top: y - 1 }} />
                  <div className="absolute font-['Liberation_Sans',sans-serif] text-[33px] leading-[33px] text-[#f4f4f4] whitespace-nowrap" style={{ left: x - 23, top: y - 20 }}>
                    {label}
                  </div>
                </div>
              ))}
              <div className="absolute left-[2263px] top-[594px] h-[293px] [writing-mode:vertical-rl] rotate-180 font-['Liberation_Sans',sans-serif] text-[36px] leading-[38px] text-[#f4f4f4] whitespace-nowrap">pred(0) Magnitude</div>
              {/* orientation axes */}
              <svg width="180" height="130" viewBox="0 0 180 130" className="absolute left-[160px] top-[1143px]">
                <path d="M18.5 20V106" stroke="#d8d84a" strokeWidth="1.4" />
                <path d="M19 106H105" stroke="#e81010" strokeWidth="1.4" />
                <path d="M18.5 7L26 27H11Z" fill="#e6e000" />
                <path d="M102 98L122 106L102 114Z" fill="#f00000" />
                <circle cx="18.5" cy="106" r="9" fill="#06600c" />
                <text x="22" y="28" fontFamily="Liberation Sans" fontSize="30" fill="#fff">Y</text>
                <text x="24" y="107" fontFamily="Liberation Sans" fontSize="30" fill="#fff">Z</text>
                <text x="102" y="107" fontFamily="Liberation Sans" fontSize="30" fill="#fff">X</text>
              </svg>
              <div className="absolute left-[2288px] top-[1271px] font-['Liberation_Sans',sans-serif] text-[18px] text-[#a9acb6] whitespace-nowrap [text-shadow:1px_1px_1px_#3c3f50]">CSDN @Forrest Guang</div>
            </div>
          </div>
        </div>
      </div>

      {/* red hand-drawn annotation on top of the screenshot */}
      <svg width="840" height="440" viewBox="0 0 840 440" className="absolute left-0 top-0 pointer-events-none">
        <path
          transform="scale(0.5357 0.3333)"
          d="M1115 325C1060 315 1000 300 960 298C900 295 860 295 810 318C775 335 745 375 735 410C722 450 716 500 720 545C726 590 745 640 775 680C810 735 850 790 900 835C930 855 990 862 1080 862C1130 860 1180 855 1210 842C1270 810 1340 790 1395 757C1425 730 1450 690 1465 640C1490 590 1508 530 1505 480C1500 420 1460 370 1425 320C1385 270 1345 225 1300 207C1260 195 1200 195 1150 218C1110 235 1085 245 1065 265C1055 280 1045 295 1040 305"
          fill="none"
          stroke="#f2140c"
          strokeWidth="6"
          strokeLinecap="round"
          vectorEffect="non-scaling-stroke"
        />
      </svg>
    </div>
  );
}
